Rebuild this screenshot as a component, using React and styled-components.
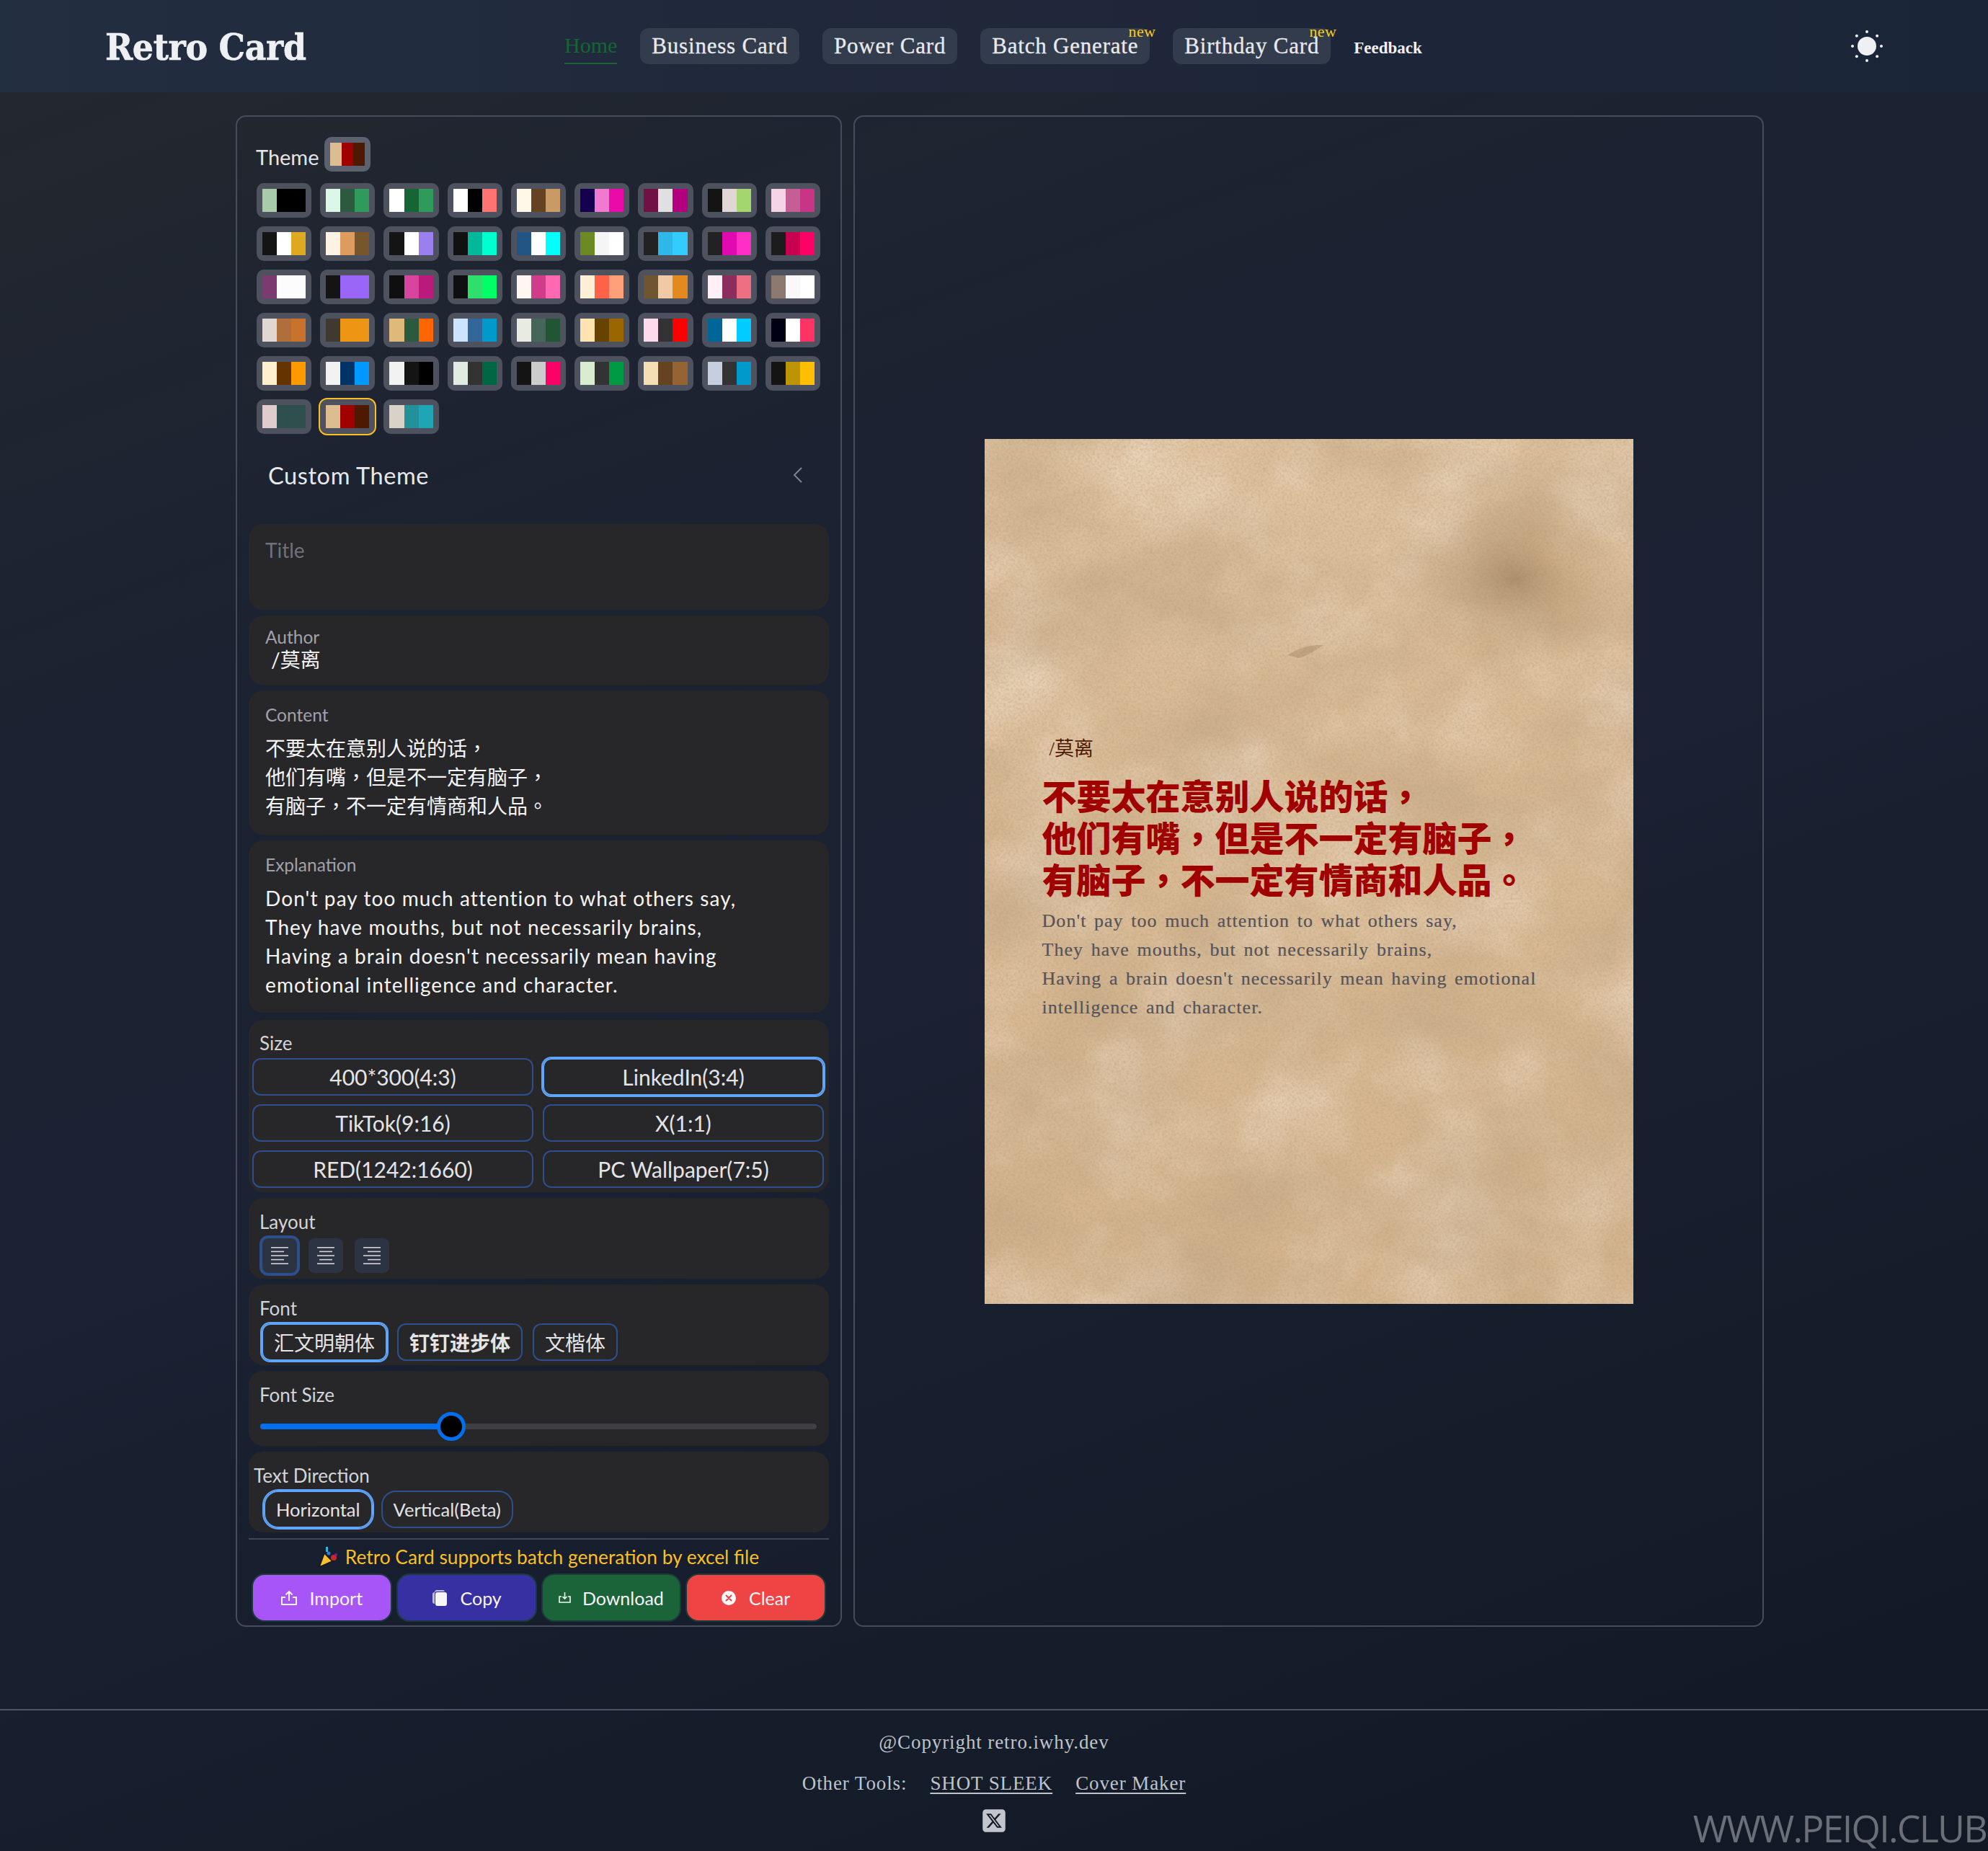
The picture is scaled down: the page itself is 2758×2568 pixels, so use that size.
import React from 'react'
import styled, { createGlobalStyle, css } from 'styled-components'
import { FaSquareXTwitter } from 'react-icons/fa6'

const UI_FONT = `Lato, "Noto Sans CJK TC", sans-serif`
const RETRO_FONT = `"Liberation Serif", "Noto Sans CJK TC", serif`

const GlobalStyle = createGlobalStyle`
  html, body { margin: 0; padding: 0; }
  body { font-family: ${UI_FONT}; background: #141b28; }
  * { box-sizing: border-box; }
`

const Page = styled.div`
  position: relative;
  width: 2758px;
  height: 2568px;
  overflow: hidden;
  background: linear-gradient(160deg, #24282f 0%, #1b2231 30%, #1a2233 50%, #151c2a 80%, #121925 100%);
`

const Header = styled.header`
  height: 128px;
  display: flex;
  align-items: center;
  padding: 0 146px;
  background: linear-gradient(90deg, #222f40 0%, #1f2739 50%, #1a2537 100%);
`

const Logo = styled.div`
  width: 637px;
  margin-top: 2px;
  font-family: "DejaVu Serif Condensed", "DejaVu Serif", serif;
  font-weight: 700;
  font-size: 51px;
  color: #eef0f3;
  letter-spacing: -0.3px;
  -webkit-text-stroke: 0.6px #eef0f3;
`

const Nav = styled.nav`
  display: flex;
  align-items: center;
  gap: 32px;
  flex: 1;
`

const NavItem = styled.a`
  position: relative;
  height: 50px;
  padding: 0 16px;
  display: flex;
  align-items: center;
  border-radius: 12px;
  background: #323c4d;
  color: #e8eaed;
  font-family: ${RETRO_FONT};
  font-size: 31px;
  line-height: 26px;
  letter-spacing: 0.8px;
  -webkit-text-stroke: 0.3px #e8eaed;
  ${p => p.$active && css`
    padding: 0;
    background: none;
    border-radius: 0;
    color: #166534;
    font-size: 30px;
    letter-spacing: 0;
    -webkit-text-stroke: 0;
    border-bottom: 2px solid #166534;
  `}
`

const NewBadge = styled.span`
  position: absolute;
  top: -2px;
  right: -8px;
  font-size: 22px;
  line-height: 14px;
  color: #facc15;
  letter-spacing: 0.4px;
  -webkit-text-stroke: 0;
`

const Feedback = styled.a`
  margin-top: 6px;
  font-family: ${RETRO_FONT};
  font-weight: 700;
  font-size: 23px;
  color: #f0f1f3;
`

const Main = styled.main`
  display: grid;
  grid-template-columns: 841px 1263px;
  gap: 16px;
  padding: 32px 0 0 327px;
`

const Panel = styled.section`
  height: 2097px;
  border: 2px solid #464c59;
  border-radius: 14px;
`

const EditorPanel = styled(Panel)`
  padding: 28px 16px 0;
  color: #e4e4e7;
`

const ThemeRow = styled.div`
  display: flex;
  align-items: flex-end;
  gap: 7px;
  padding-left: 10px;
  font-size: 29px;
  line-height: 40px;
`

const Swatch = styled.button`
  padding: 8px;
  border: 0;
  border-radius: 10px;
  background: ${p => (p.$current ? '#5c6170' : '#4e525f')};
  display: flex;
  width: ${p => (p.$current ? '64px' : '100%')};
  height: 48px;
  ${p => p.$selected && css`outline: 2px solid #fbbf24;`}
`

const Stripe = styled.span`
  flex: 1;
  background: ${p => p.$color};
`

const SwatchGrid = styled.div`
  display: grid;
  grid-template-columns: repeat(9, 1fr);
  width: 782px;
  gap: 12px;
  margin: 16px 0 0 11px;
`

const Accordion = styled.div`
  height: 60px;
  margin: 27px 0 38px;
  padding: 0 36px 0 27px;
  display: flex;
  align-items: center;
  justify-content: space-between;
  font-size: 32.5px;
  letter-spacing: 0.6px;
  color: #e8e8ea;
`

const Stack = styled.div`
  display: flex;
  flex-direction: column;
  gap: 8px;
`

const Box = styled.div`
  height: ${p => p.$h}px;
  margin-bottom: ${p => p.$mb || 0}px;
  padding: ${p => p.$pad || '0 23px'};
  border-radius: 20px;
  background: #27272a;
`

const FieldLabel = styled.div`
  padding-top: ${p => p.$top || 22}px;
  font-size: 24.5px;
  line-height: 30px;
  color: #a1a1aa;
`

const TitleLabel = styled(FieldLabel)`
  font-size: 28px;
  color: #71717a;
`

const AuthorValue = styled.div`
  padding-left: 8px;
  font-size: 28px;
  line-height: 32px;
  color: #f4f4f5;
`

const Multiline = styled.div`
  margin-top: 11px;
  font-size: 28px;
  line-height: 40px;
  white-space: pre-line;
  color: #f4f4f5;
  ${p => p.$latin && css`letter-spacing: 1.1px;`}
`

const GroupLabel = styled.div`
  padding: ${p => p.$top}px 0 0 ${p => p.$left ?? 15}px;
  font-size: 26px;
  line-height: 30px;
  color: #d4d4d8;
`

const SizeGrid = styled.div`
  display: grid;
  grid-template-columns: 390px 390px;
  gap: 12px 13px;
  margin: 6px 0 0 5px;
`

const Outline = styled.button`
  position: relative;
  height: 52px;
  border: 2px solid #2d4f8e;
  border-radius: 12px;
  background: transparent;
  color: #e4e4e7;
  font-family: ${UI_FONT};
  font-size: 30px;
  padding: 0;
  ${p => p.$on && css`
    border-color: #60a5fa;
    box-shadow: 0 0 0 2px #60a5fa;
  `}
`

const Row = styled.div`
  display: flex;
  align-items: center;
  gap: ${p => p.$gap || 12}px;
  margin: ${p => p.$m};
`

const AlignButton = styled.button`
  width: 48px;
  height: 48px;
  padding: 0;
  border: 0;
  border-radius: 8px;
  background: #2c3444;
  display: flex;
  align-items: center;
  justify-content: center;
  ${p => p.$on && css`box-shadow: 0 0 0 4px #2d4f8e; margin-left: 3px;`}
`

const FontButton = styled(Outline)`
  padding: 0 15px;
  font-size: 28px;
  font-weight: ${p => (p.$bold ? 700 : 400)};
`

const PillButton = styled(Outline)`
  padding: 0 15px;
  font-size: 25.5px;
  border-radius: 20px;
`

const Track = styled.div`
  position: relative;
  height: 8px;
  margin: 25px 0 0 16px;
  width: 772px;
  border-radius: 4px;
  background: #3f3f46;
`

const TrackFill = styled.div`
  height: 100%;
  border-radius: 4px;
  background: #006fee;
`

const Thumb = styled.div`
  position: absolute;
  top: -16px;
  width: 40px;
  height: 40px;
  margin-left: -20px;
  border-radius: 50%;
  background: #000;
  border: 5px solid #006fee;
`

const Divider = styled.div`
  height: 2px;
  margin-top: 8px;
  background: #3f4654;
`

const Notice = styled.div`
  display: flex;
  align-items: center;
  justify-content: center;
  gap: 10px;
  height: 47px;
  font-size: 26.3px;
  color: #fbbf24;
`

const ActionRow = styled.div`
  display: grid;
  grid-template-columns: repeat(4, 1fr);
  gap: 6px;
  margin: 0 4px;
`

const Action = styled.button`
  height: 67px;
  border: 2px solid #1c3a3a;
  border-radius: 18px;
  background: ${p => p.$bg};
  color: #f6f6f8;
  font-family: ${UI_FONT};
  font-size: 25px;
  display: flex;
  align-items: center;
  justify-content: center;
  gap: ${p => p.$gap || 18}px;
`

const PreviewPanel = styled(Panel)`
  display: flex;
  align-items: center;
  justify-content: center;
`

const Card = styled.article`
  position: relative;
  width: 900px;
  height: 1200px;
  padding: 0 80px;
  display: flex;
  flex-direction: column;
  justify-content: center;
  background: #dcbe98;
`

const PaperLayer = styled.svg`
  position: absolute;
  inset: 0;
  width: 100%;
  height: 100%;
`

const CardBody = styled.div`
  position: relative;
  margin-top: 25px;
`

const CardAuthor = styled.div`
  padding-left: 10px;
  font-family: ${RETRO_FONT};
  font-size: 27px;
  line-height: 30px;
  color: #4f1800;
`

const CardTitle = styled.h2`
  margin: 19px 0 11px;
  font-family: "Noto Sans CJK TC", serif;
  font-weight: 900;
  font-size: 48px;
  line-height: 58px;
  white-space: pre-line;
  color: #a00000;
`

const CardText = styled.p`
  margin: 0;
  font-family: ${RETRO_FONT};
  font-size: 26px;
  line-height: 40px;
  letter-spacing: 1.05px;
  word-spacing: 3px;
  color: #55535a;
  -webkit-text-stroke: 0.2px #55535a;
`

const Footer = styled.footer`
  margin-top: 114px;
  height: 197px;
  border-top: 2px solid #4b5563;
  display: flex;
  flex-direction: column;
  align-items: center;
  font-family: ${RETRO_FONT};
  font-size: 27px;
  letter-spacing: 0.9px;
  color: #bfc3ca;
`

const Copyright = styled.div`
  margin-top: 27px;
  line-height: 34px;
`

const ToolRow = styled.div`
  display: flex;
  gap: 32px;
  margin-top: 23px;
  line-height: 34px;
`

const ToolLink = styled.a`
  text-decoration: underline;
  text-underline-offset: 4px;
  text-decoration-thickness: 2px;
`

const SocialLink = styled.a`
  margin-top: 17px;
  display: flex;
  color: #c2c5cb;
`

const Watermark = styled.div`
  position: absolute;
  right: 2px;
  bottom: 0;
  font-family: "Open Sans", sans-serif;
  font-size: 52px;
  line-height: 64px;
  letter-spacing: -1.8px;
  color: #6b7078;
`

const SWATCHES = [
  ['#a8ccaa', '#000000', '#000000'], ['#dcf7e8', '#2c5a3f', '#2f9a5a'], ['#ffffff', '#166534', '#2f9a5a'],
  ['#ffffff', '#000000', '#ff7373'], ['#fff8e8', '#654321', '#c99a66'], ['#15004f', '#f07ad0', '#ea0aa9'],
  ['#701045', '#e0e0e0', '#b3007f'], ['#141414', '#e0d6d6', '#a4d66f'], ['#f5d5e5', '#c45e95', '#c73587'],
  ['#141414', '#ffffff', '#dea91e'], ['#fdf2e4', '#de9b5e', '#78552b'], ['#141414', '#ffffff', '#9b7fef'],
  ['#111111', '#00b89a', '#00ffd0'], ['#225586', '#ffffff', '#00ffff'], ['#6b8a24', '#f5f5f5', '#ffffff'],
  ['#222222', '#2eb8e8', '#33ccff'], ['#222222', '#e00ab0', '#ff2ec4'], ['#1c1c1c', '#c9004f', '#ff0066'],
  ['#7b3a70', '#fcfcfc', '#fcfcfc'], ['#141414', '#9966f8', '#9966f8'], ['#0f0f0f', '#d9459e', '#bb1a7d'],
  ['#0f0f0f', '#2ee06b', '#00ff66'], ['#fff6f0', '#d13c8a', '#ff69b4'], ['#ffefd5', '#ff6347', '#ffa07a'],
  ['#6f5530', '#f0c9a6', '#e38a1e'], ['#fff0f5', '#8b2e5e', '#ee6e82'], ['#8c7a70', '#f9f9f9', '#ffffff'],
  ['#e0d6d2', '#b06f3a', '#c8722c'], ['#3e3a30', '#ee9614', '#ee9614'], ['#deb97a', '#2c5a3f', '#ff6600'],
  ['#cce4ff', '#336699', '#0099cc'], ['#e8ebe2', '#44675a', '#225533'], ['#ffe4b0', '#664400', '#996600'],
  ['#ffd9ec', '#333333', '#ff0000'], ['#006699', '#ffffff', '#00ccff'], ['#000014', '#ffffff', '#ff3366'],
  ['#ffefcf', '#663300', '#ff9900'], ['#f2f2f2', '#003366', '#0099ff'], ['#f2f2f2', '#141414', '#000000'],
  ['#e2ebe2', '#333333', '#006644'], ['#141414', '#cccccc', '#ff0066'], ['#d9ecd0', '#333333', '#009944'],
  ['#f5deb3', '#654321', '#966433'], ['#c5cfe0', '#333333', '#0099cc'], ['#141414', '#bd9404', '#ffbf00'],
  ['#e0cccc', '#2f4f4f', '#2f4f4f'], ['#dcbd92', '#a00000', '#4f1800'], ['#d8d2c8', '#229199', '#20a5b5'],
]

const SIZES = ['400*300(4:3)', 'LinkedIn(3:4)', 'TikTok(9:16)', 'X(1:1)', 'RED(1242:1660)', 'PC Wallpaper(7:5)']

const SunIcon = () => (
  <svg width="44" height="44" viewBox="-22 -22 44 44" fill="#eef0f3">
    <circle r="13" />
    {[0, 45, 90, 135, 180, 225, 270, 315].map(a => (
      <circle key={a} r="2" cx={20 * Math.cos(a * Math.PI / 180)} cy={20 * Math.sin(a * Math.PI / 180)} />
    ))}
  </svg>
)

const ChevronLeft = () => (
  <svg width="14" height="22" viewBox="0 0 14 22" fill="none" stroke="#7d828c" strokeWidth="2">
    <path d="M12 1 L2 11 L12 21" />
  </svg>
)

const AlignIcon = ({ mode }) => {
  const x = short => (mode === 'left' ? 0 : mode === 'right' ? (short ? 6 : 0) : short ? 3 : 0)
  return (
    <svg width="24" height="24" viewBox="0 0 24 24" stroke="#d4d4d8" strokeWidth="1.6">
      {[0, 1, 2, 3, 4].map(i => {
        const short = i % 2 === 1
        return <line key={i} x1={x(short)} x2={x(short) + (short ? 18 : 24)} y1={0.8 + i * 5.6} y2={0.8 + i * 5.6} />
      })}
    </svg>
  )
}

const ImportIcon = () => (
  <svg width="22" height="20" viewBox="0 0 22 20" fill="none" stroke="#f6f6f8" strokeWidth="2">
    <path d="M6 9 H1 V19 H21 V9 H16" />
    <path d="M11 14 V1 M6.5 5.5 L11 1 L15.5 5.5" />
  </svg>
)

const CopyIcon = () => (
  <svg width="22" height="22" viewBox="0 0 22 22" fill="#f6f6f8">
    <path d="M4 3 a3 3 0 0 1 3 -3 h8 a3 3 0 0 1 3 2 H7 a3 3 0 0 0 -3 3 z" opacity="0.7" />
    <rect x="5" y="3" width="16" height="19" rx="3" />
    <path d="M1 6 a3 3 0 0 1 3 -3 v16 a3 3 0 0 1 -3 -3 z" opacity="0.7" />
  </svg>
)

const DownloadIcon = () => (
  <svg width="17" height="15" viewBox="0 0 17 15" fill="none" stroke="#f6f6f8" strokeWidth="1.6">
    <path d="M4 6 H1 V14 H16 V6 H13" />
    <path d="M8.5 0 V9 M5.5 6 L8.5 9 L11.5 6" />
  </svg>
)

const ClearIcon = () => (
  <svg width="20" height="20" viewBox="0 0 20 20">
    <circle cx="10" cy="10" r="10" fill="#fafafa" />
    <path d="M6.5 6.5 L13.5 13.5 M13.5 6.5 L6.5 13.5" stroke="#ef4444" strokeWidth="2" strokeLinecap="round" />
  </svg>
)

const PartyIcon = () => (
  <svg width="27" height="30" viewBox="0 0 27 30">
    <path d="M1 29 L8 10 L19 21 Z" fill="#fbc02d" stroke="#1a1a1a" strokeWidth="1.5" />
    <rect x="10" y="1" width="3" height="7" fill="#29b6d8" />
    <circle cx="14" cy="10" r="2.5" fill="#2a7fd0" />
    <circle cx="21" cy="16" r="4" fill="#c62828" />
    <circle cx="24" cy="12" r="2" fill="#7b1fa2" />
  </svg>
)

const PaperTexture = () => (
  <PaperLayer viewBox="0 0 900 1200" preserveAspectRatio="none">
    <defs>
      <filter id="blotches" x="0" y="0" width="100%" height="100%">
        <feTurbulence type="fractalNoise" baseFrequency="0.005 0.007" numOctaves="7" seed="11" />
        <feColorMatrix values="0 0 0 0 0.54  0 0 0 0 0.38  0 0 0 0 0.22  1.3 0 0 0 -0.48" />
      </filter>
      <filter id="light" x="0" y="0" width="100%" height="100%">
        <feTurbulence type="fractalNoise" baseFrequency="0.007" numOctaves="7" seed="4" />
        <feColorMatrix values="0 0 0 0 0.93  0 0 0 0 0.82  0 0 0 0 0.7  0 1.1 0 0 -0.45" />
      </filter>
      <filter id="grain" x="0" y="0" width="100%" height="100%">
        <feTurbulence type="fractalNoise" baseFrequency="0.3" numOctaves="3" seed="7" />
        <feColorMatrix values="0 0 0 0 0.45  0 0 0 0 0.32  0 0 0 0 0.2  0.8 0 0 0 -0.3" />
      </filter>
      <radialGradient id="stain">
        <stop offset="0" stopColor="#8f6d48" stopOpacity="0.55" />
        <stop offset="0.45" stopColor="#a5835b" stopOpacity="0.26" />
        <stop offset="1" stopColor="#a5835b" stopOpacity="0" />
      </radialGradient>
      <linearGradient id="fade" x1="0" y1="0" x2="0" y2="1">
        <stop offset="0" stopColor="#e6cdac" stopOpacity="0.35" />
        <stop offset="0.5" stopColor="#c9a67d" stopOpacity="0.18" />
        <stop offset="1" stopColor="#bd9a70" stopOpacity="0.25" />
      </linearGradient>
    </defs>
    <rect width="900" height="1200" fill="url(#fade)" />
    <rect width="900" height="1200" filter="url(#light)" />
    <rect width="900" height="1200" filter="url(#blotches)" />
    <rect width="900" height="1200" filter="url(#grain)" />
    <ellipse cx="735" cy="195" rx="160" ry="130" fill="url(#stain)" />
    <path d="M420 300 q24 -16 50 -14 q-20 14 -34 18 z" fill="#7a5c3c" opacity="0.25" />
  </PaperLayer>
)

const App = () => (
  <Page>
    <GlobalStyle />
    <Header>
      <Logo>Retro Card</Logo>
      <Nav>
        <NavItem $active>Home</NavItem>
        <NavItem>Business Card</NavItem>
        <NavItem>Power Card</NavItem>
        <NavItem>Batch Generate<NewBadge>new</NewBadge></NavItem>
        <NavItem>Birthday Card<NewBadge>new</NewBadge></NavItem>
        <Feedback>Feedback</Feedback>
      </Nav>
      <SunIcon />
    </Header>

    <Main>
      <EditorPanel>
        <ThemeRow>
          Theme
          <Swatch $current>
            <Stripe $color="#dcbd92" /><Stripe $color="#a00000" /><Stripe $color="#4f1800" />
          </Swatch>
        </ThemeRow>
        <SwatchGrid>
          {SWATCHES.map((colors, i) => (
            <Swatch key={i} $selected={i === 46}>
              {colors.map((c, j) => <Stripe key={j} $color={c} />)}
            </Swatch>
          ))}
        </SwatchGrid>
        <Accordion>
          Custom Theme
          <ChevronLeft />
        </Accordion>

        <Stack>
          <Box $h={119}><TitleLabel $top={21}>Title</TitleLabel></Box>
          <Box $h={96}>
            <FieldLabel $top={15}>Author</FieldLabel>
            <AuthorValue>/莫离</AuthorValue>
          </Box>
          <Box $h={200}>
            <FieldLabel $top={19}>Content</FieldLabel>
            <Multiline>{'不要太在意别人说的话，\n他们有嘴，但是不一定有脑子，\n有脑子，不一定有情商和人品。'}</Multiline>
          </Box>
          <Box $h={239} $mb={2}>
            <FieldLabel $top={19}>Explanation</FieldLabel>
            <Multiline $latin>{"Don't pay too much attention to what others say,\nThey have mouths, but not necessarily brains,\nHaving a brain doesn't necessarily mean having\nemotional intelligence and character."}</Multiline>
          </Box>
          <Box $h={239} $pad="0">
            <GroupLabel $top={17}>Size</GroupLabel>
            <SizeGrid>
              {SIZES.map(s => <Outline key={s} $on={s === 'LinkedIn(3:4)'}>{s}</Outline>)}
            </SizeGrid>
          </Box>
          <Box $h={112} $pad="0">
            <GroupLabel $top={18}>Layout</GroupLabel>
            <Row $gap={16} $m="8px 0 0 16px">
              <AlignButton $on><AlignIcon mode="left" /></AlignButton>
              <AlignButton><AlignIcon mode="center" /></AlignButton>
              <AlignButton><AlignIcon mode="right" /></AlignButton>
            </Row>
          </Box>
          <Box $h={112} $pad="0">
            <GroupLabel $top={18}>Font</GroupLabel>
            <Row $gap={14} $m="6px 0 0 18px">
              <FontButton $on>汇文明朝体</FontButton>
              <FontButton $bold>钉钉进步体</FontButton>
              <FontButton>文楷体</FontButton>
            </Row>
          </Box>
          <Box $h={104} $pad="0">
            <GroupLabel $top={18}>Font Size</GroupLabel>
            <Track>
              <TrackFill style={{ width: '34.3%' }} />
              <Thumb style={{ left: '34.3%' }} />
            </Track>
          </Box>
          <Box $h={112} $pad="0">
            <GroupLabel $top={18} $left={7}>Text Direction</GroupLabel>
            <Row $gap={12} $m="6px 0 0 21px">
              <PillButton $on>Horizontal</PillButton>
              <PillButton>Vertical(Beta)</PillButton>
            </Row>
          </Box>
        </Stack>

        <Divider />
        <Notice>
          <PartyIcon />
          Retro Card supports batch generation by excel file
        </Notice>
        <ActionRow>
          <Action $bg="#a855f7"><ImportIcon />Import</Action>
          <Action $bg="#3730a3"><CopyIcon />Copy</Action>
          <Action $bg="#1b6339" $gap={16}><DownloadIcon />Download</Action>
          <Action $bg="#ef4444"><ClearIcon />Clear</Action>
        </ActionRow>
      </EditorPanel>

      <PreviewPanel>
        <Card>
          <PaperTexture />
          <CardBody>
            <CardAuthor>/莫离</CardAuthor>
            <CardTitle>{'不要太在意别人说的话，\n他们有嘴，但是不一定有脑子，\n有脑子，不一定有情商和人品。'}</CardTitle>
            <CardText>
              Don't pay too much attention to what others say,<br />
              They have mouths, but not necessarily brains,<br />
              Having a brain doesn't necessarily mean having emotional intelligence and character.
            </CardText>
          </CardBody>
        </Card>
      </PreviewPanel>
    </Main>

    <Footer>
      <Copyright>@Copyright retro.iwhy.dev</Copyright>
      <ToolRow>
        <span>Other Tools:</span>
        <ToolLink>SHOT SLEEK</ToolLink>
        <ToolLink>Cover Maker</ToolLink>
      </ToolRow>
      <SocialLink><FaSquareXTwitter size={36} /></SocialLink>
    </Footer>
    <Watermark>WWW.PEIQI.CLUB</Watermark>
  </Page>
)

export default App
